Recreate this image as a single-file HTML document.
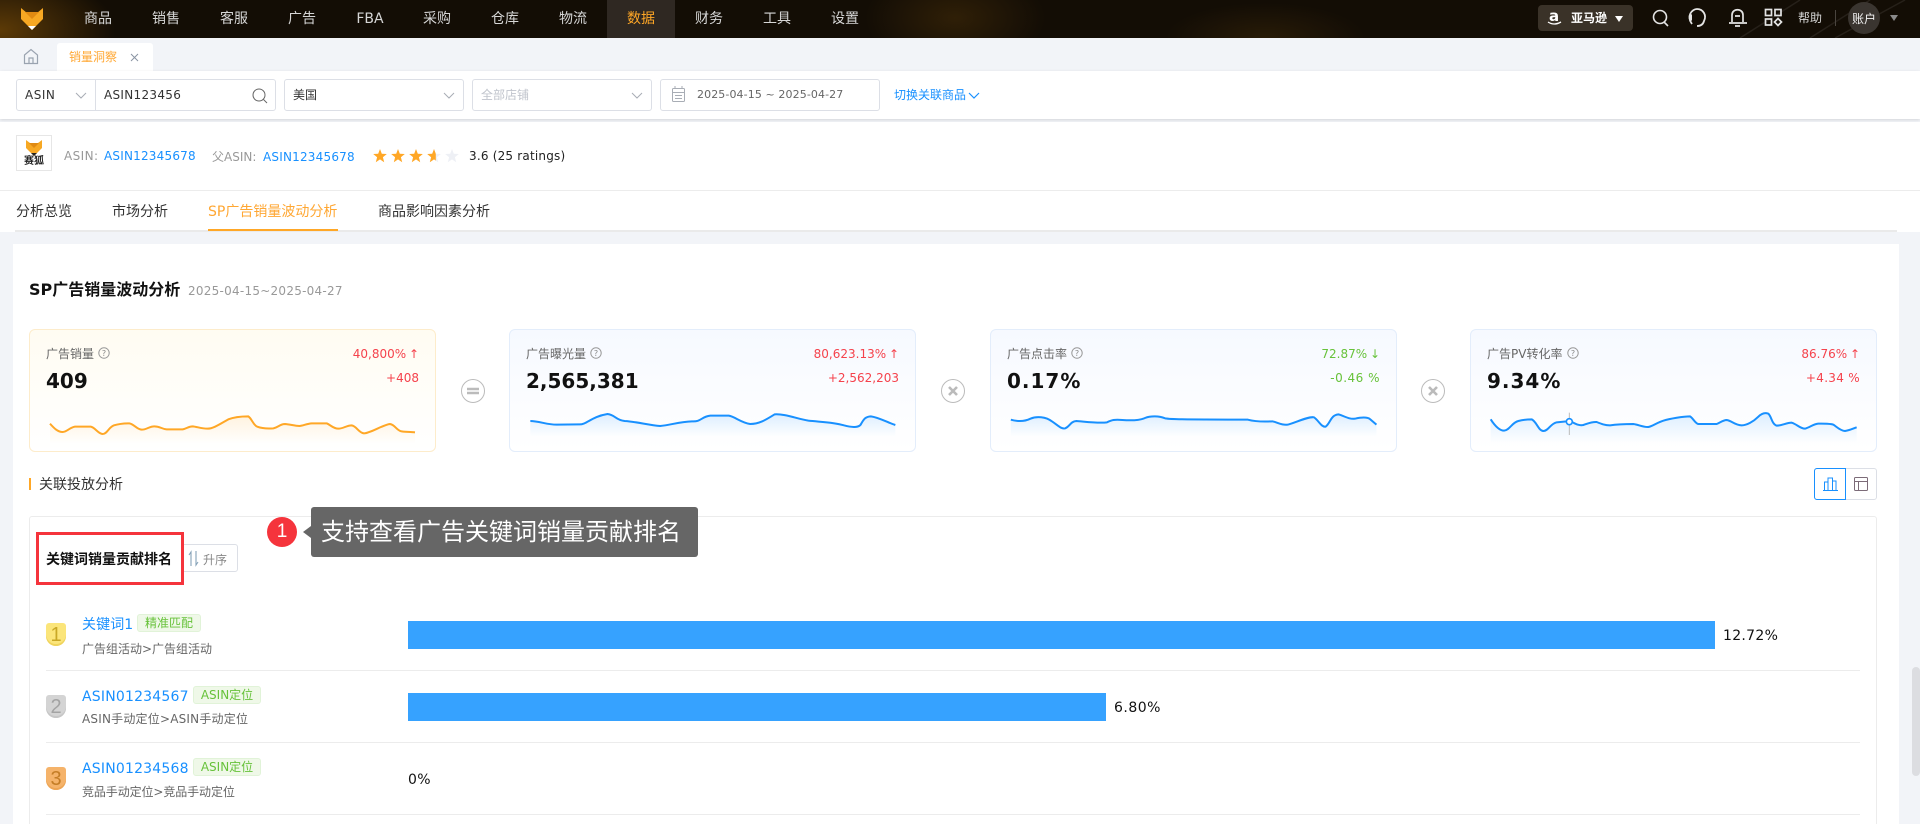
<!DOCTYPE html>
<html lang="zh">
<head>
<meta charset="utf-8">
<title>SP广告销量波动分析</title>
<style>
*{box-sizing:border-box;margin:0;padding:0}
html,body{width:1920px;height:824px;overflow:hidden;background:#f2f4f8}
body{position:relative;font-family:"DejaVu Sans","Noto Sans CJK SC",sans-serif;font-size:12px;color:#333}
.a{position:absolute}
.t{position:absolute;white-space:nowrap;line-height:20px}
.l{letter-spacing:.2px}
.nav{color:#d6d6d6;font-size:14px;top:9px;width:68px;text-align:center}
.box{position:absolute;top:79px;height:32px;background:#fff;border:1px solid #dcdfe6;border-radius:3px}
.blue{color:#1890ff}
.card{position:absolute;top:329px;width:407px;height:123px;border-radius:6px;border:1px solid #e3edfb;background:linear-gradient(#f6f9ff,#fff)}
.card.y{border-color:#fdeccb;background:linear-gradient(#fffcf2,#fff)}
.lab{color:#666;top:14px;left:16px}
.pct{top:14px;right:16px;font-size:12px;word-spacing:-1px}
.dlt{top:38px;right:16px;font-size:12px}
.val{top:39px;left:16px;font-size:20px;font-weight:bold;color:#111;line-height:24px}
.red{color:#f5424c}.grn{color:#67c23a}
.op{position:absolute;top:379px;width:24px;height:24px;border-radius:50%;border:1px solid #bbb;background:#fff}
.tag{position:absolute;height:18px;line-height:16px;background:#eff8e8;border:1px solid #e1f3d8;border-radius:3px;color:#67c23a;text-align:center;font-size:12px}
.sep{position:absolute;left:46px;width:1814px;height:1px;background:#ececec}
.name{font-size:14px;color:#1890ff;left:82px}
.sub{color:#666;left:82px}
.bar{position:absolute;left:408px;height:28px;background:#36a2ff}
.num{font-size:14px;color:#111;letter-spacing:.3px}
.m{position:absolute;left:46px;width:20px;height:23px;border-radius:3px 3px 10px 10px;text-align:center;font-family:"Liberation Sans",sans-serif;font-size:20px;line-height:24px}
</style>
</head>
<body>
<!-- top bar -->
<div class="a" style="left:0;top:0;width:1920px;height:38px;background:radial-gradient(ellipse 115px 60px at 0 30px,#5c3a06 0,rgba(90,58,6,0) 100%),radial-gradient(ellipse 90px 50px at 955px 18px,#2f1f07 0,rgba(60,39,8,0) 100%),radial-gradient(ellipse 100px 35px at 1265px 38px,#281b07 0,rgba(44,29,7,0) 100%),#130d05"></div>
<svg class="a" style="left:0;top:0" width="1920" height="38">
<polygon points="21,8 27,13 37,13 43,8 43,19 32,30 21,19" fill="#f7a823"/>
<polygon points="25,12 39,12 32,19" fill="#e08a12"/>
<polygon points="28,26 36,26 32,30" fill="#fff"/>
<path d="M1740 38 L1800 0M1810 38 L1870 0M1835 38 L1905 0" stroke="#262019" stroke-width="1.5" fill="none"/>
</svg>
<div class="a" style="left:607px;top:0;width:68px;height:38px;background:#2f2822"></div>
<div class="t nav" style="left:64px">商品</div>
<div class="t nav" style="left:132px">销售</div>
<div class="t nav" style="left:200px">客服</div>
<div class="t nav" style="left:268px">广告</div>
<div class="t nav" style="left:336px">FBA</div>
<div class="t nav" style="left:403px">采购</div>
<div class="t nav" style="left:471px">仓库</div>
<div class="t nav" style="left:539px">物流</div>
<div class="t nav" style="left:607px;color:#ffa726">数据</div>
<div class="t nav" style="left:675px">财务</div>
<div class="t nav" style="left:743px">工具</div>
<div class="t nav" style="left:811px">设置</div>

<div class="a" style="left:1538px;top:5px;width:95px;height:26px;background:#3a3228;border-radius:4px"></div>
<div class="t" style="left:1549px;top:6px;color:#fff;font-size:15px;font-weight:bold">a</div>
<svg class="a" style="left:1546px;top:21px" width="18" height="6"><path d="M2 1 Q8 5 15 1" stroke="#fff" stroke-width="1.3" fill="none"/></svg>
<div class="t" style="left:1571px;top:8px;color:#fff;font-weight:bold">亚马逊</div>
<svg class="a" style="left:0;top:0" width="1920" height="38">
<polygon points="1615,16 1623,16 1619,22" fill="#fff"/>
<circle cx="1660" cy="17" r="6.5" stroke="#e4e4e4" stroke-width="1.6" fill="none"/><path d="M1664 22 L1668 26" stroke="#e4e4e4" stroke-width="1.6"/>
<path d="M1692 24 C1686 16,1692 9,1697 9 C1703 9,1707 15,1704 21 C1703 25,1700 26,1697 26" stroke="#e4e4e4" stroke-width="1.8" fill="none"/><rect x="1689" y="14" width="3" height="7" rx="1.5" fill="#e4e4e4"/>
<path d="M1732 22 L1732 15 C1732 8,1743 8,1743 15 L1743 22 M1729 23 L1747 23 M1735 26 L1740 26 M1735 16 L1740 16" stroke="#e4e4e4" stroke-width="1.7" fill="none"/>
<rect x="1765.5" y="9.5" width="6" height="6" stroke="#e4e4e4" stroke-width="1.7" fill="none"/><rect x="1775" y="9.5" width="6" height="6" stroke="#e4e4e4" stroke-width="1.7" fill="none"/><rect x="1765.5" y="19" width="6" height="6" stroke="#e4e4e4" stroke-width="1.7" fill="none"/><polygon points="1778,18.5 1781.5,22 1778,25.5 1774.5,22" stroke="#e4e4e4" stroke-width="1.7" fill="none"/>
<rect x="1835" y="10" width="1" height="16" fill="#4a453f"/>
<circle cx="1864" cy="18" r="16" fill="#3a3530"/>
<polygon points="1890,15 1898,15 1894,21" fill="#8a8a8a"/>
</svg>
<div class="t" style="left:1798px;top:8px;color:#d6d6d6">帮助</div>
<div class="t" style="left:1852px;top:9px;color:#f2f2f2">账户</div>

<!-- tabs -->
<div class="a" style="left:57px;top:43px;width:96px;height:28px;background:#fff;border-radius:3px 3px 0 0"></div>
<svg class="a" style="left:23px;top:48px" width="16" height="17"><path d="M1.5 7 L8 1.5 L14.5 7 L14.5 15.5 L1.5 15.5 Z M6 15.5 L6 10 L10 10 L10 15.5" stroke="#9aa3b0" stroke-width="1.2" fill="none"/></svg>
<div class="t" style="left:69px;top:47px;color:#ffa733">销量洞察</div>
<svg class="a" style="left:130px;top:53px" width="9" height="9"><path d="M1 1 L8 8 M8 1 L1 8" stroke="#8a94a3" stroke-width="1"/></svg>

<!-- filter bar -->
<div class="a" style="left:0;top:71px;width:1920px;height:48px;background:#fff;box-shadow:0 1px 3px rgba(0,0,0,.13)"></div>
<div class="box" style="left:16px;width:260px"></div>
<div class="a" style="left:95px;top:79px;width:1px;height:32px;background:#dcdfe6"></div>
<div class="t" style="left:25px;top:85px;color:#333;letter-spacing:.5px">ASIN</div>
<div class="t" style="left:104px;top:85px;color:#333;letter-spacing:.3px">ASIN123456</div>
<div class="box" style="left:284px;width:180px"></div>
<div class="t" style="left:293px;top:85px">美国</div>
<div class="box" style="left:472px;width:180px"></div>
<div class="t" style="left:481px;top:85px;color:#c0c4cc">全部店铺</div>
<div class="box" style="left:660px;width:220px"></div>
<div class="t" style="left:697px;top:85px;color:#666;font-size:11px;letter-spacing:.1px">2025-04-15 ~ 2025-04-27</div>
<div class="t blue" style="left:894px;top:85px">切换关联商品</div>
<svg class="a" style="left:0;top:71px" width="1000" height="48">
<g fill="none" stroke="#a8adb5" stroke-width="1">
<path d="M76 22 L81 27 L86 22M444 22 L449 27 L454 22M632 22 L637 27 L642 22"/>
<circle cx="259" cy="24" r="6" stroke="#666"/><path d="M263.5 28.5 L267 32" stroke="#666"/>
<rect x="672.5" y="17.5" width="12" height="13" rx="1"/><path d="M672.5 21.5H684.5M675 24.5H682M675 27.5H682M675 15V18M682 15V18"/>
</g>
<path d="M969 22 L974 27 L979 22" fill="none" stroke="#1890ff" stroke-width="1.2"/>
</svg>

<!-- product -->
<div class="a" style="left:0;top:122px;width:1920px;height:110px;background:#fff"></div>
<div class="a" style="left:0;top:190px;width:1920px;height:1px;background:#ececec"></div>
<div class="a" style="left:16px;top:135px;width:36px;height:36px;background:#fff;border:1px solid #e6e6e6"></div>
<svg class="a" style="left:16px;top:135px" width="36" height="36">
<polygon points="10,5 14,8 22,8 26,5 26,13 18,21 10,13" fill="#f7a823"/><polygon points="13,8 23,8 18,13" fill="#e08a12"/><polygon points="15,18 21,18 18,21" fill="#222"/>
</svg>
<div class="t" style="left:24px;top:155px;font-size:10px;font-weight:bold;color:#222;line-height:14px">赛狐</div>
<div class="t l" style="left:64px;top:146px;color:#999;letter-spacing:.4px">ASIN:</div>
<div class="t blue l" style="left:104px;top:146px">ASIN12345678</div>
<div class="t" style="left:212px;top:147px;color:#999">父ASIN:</div>
<div class="t blue l" style="left:263px;top:147px">ASIN12345678</div>
<svg class="a" style="left:370px;top:146px" width="95" height="20">
<defs><path id="s" d="M7 2 L8.8 6.8 L13.8 7 L9.9 10.2 L11.2 15.2 L7 12.4 L2.8 15.2 L4.1 10.2 L.2 7 L5.2 6.8 Z"/></defs>
<use href="#s" x="3" y="1" fill="#ffa726"/><use href="#s" x="21" y="1" fill="#ffa726"/><use href="#s" x="39" y="1" fill="#ffa726"/><use href="#s" x="57" y="1" fill="#eef0f5"/><path transform="translate(57 1)" d="M7 2 L8.8 6.8 L13.8 7 L9.9 10.2 L11.2 15.2 L7 12.4 L2.8 15.2 L4.1 10.2 L.2 7 L5.2 6.8 Z" fill="#ffa726" clip-path="inset(0 5px 0 0)"/><use href="#s" x="75" y="1" fill="#eef0f5"/>
</svg>
<div class="t l" style="left:469px;top:146px;color:#222">3.6 (25 ratings)</div>
<div class="t" style="left:16px;top:202px;font-size:14px;color:#333">分析总览</div>
<div class="t" style="left:112px;top:202px;font-size:14px;color:#333">市场分析</div>
<div class="t" style="left:208px;top:202px;font-size:14px;color:#ffa733">SP广告销量波动分析</div>
<div class="t" style="left:378px;top:202px;font-size:14px;color:#333">商品影响因素分析</div>
<div class="a" style="left:15px;top:230px;width:1882px;height:2px;background:#eaeaea"></div>
<div class="a" style="left:208px;top:229px;width:130px;height:2px;background:#ffa726"></div>
<div class="a" style="left:1897px;top:232px;width:23px;height:592px;background:#f2f4f8"></div>
<div class="a" style="left:0;top:232px;width:1920px;height:12px;background:#f2f4f8"></div>

<!-- main -->
<div class="a" style="left:13px;top:244px;width:1886px;height:580px;background:#fff"></div>
<div class="a" style="left:1912px;top:667px;width:8px;height:109px;background:#dcdde1;border-radius:4px"></div>
<div class="t" style="left:29px;top:280px;font-size:16px;font-weight:bold;color:#111">SP广告销量波动分析</div>
<div class="t l" style="left:188px;top:281px;color:#999;letter-spacing:.25px">2025-04-15~2025-04-27</div>

<div class="card y" style="left:29px">
<div class="t lab">广告销量</div><div class="t pct red">40,800% ↑</div><div class="t dlt red">+408</div><div class="val t">409</div>
</div>
<div class="card" style="left:509px">
<div class="t lab">广告曝光量</div><div class="t pct red">80,623.13% ↑</div><div class="t dlt red">+2,562,203</div><div class="val t">2,565,381</div>
</div>
<div class="card" style="left:990px">
<div class="t lab">广告点击率</div><div class="t pct grn">72.87% ↓</div><div class="t dlt grn" style="letter-spacing:.5px">-0.46 %</div><div class="val t" style="letter-spacing:1px">0.17%</div>
</div>
<div class="card" style="left:1470px">
<div class="t lab">广告PV转化率</div><div class="t pct red">86.76% ↑</div><div class="t dlt red" style="letter-spacing:.3px">+4.34 %</div><div class="val t" style="letter-spacing:1px">9.34%</div>
</div>

<div class="op" style="left:461px"></div>
<div class="op" style="left:941px"></div>
<div class="op" style="left:1421px"></div>

<svg class="a" style="left:0;top:0" width="1920" height="824">
<defs>
<linearGradient id="gy" x1="0" y1="0" x2="0" y2="1"><stop offset="0" stop-color="#ffa726" stop-opacity=".13"/><stop offset="1" stop-color="#ffa726" stop-opacity="0"/></linearGradient>
<linearGradient id="gb" x1="0" y1="0" x2="0" y2="1"><stop offset="0" stop-color="#1890ff" stop-opacity=".14"/><stop offset="1" stop-color="#1890ff" stop-opacity="0"/></linearGradient>
</defs>
<!-- operators -->
<g stroke="#bbb" stroke-width="2.6" fill="none"><path d="M467 389H479M467 393H479"/><path d="M949 387L957 395M957 387L949 395"/><path d="M1429 387L1437 395M1437 387L1429 395"/></g>
<!-- help icons -->
<g fill="none" stroke="#999" stroke-width="1"><circle cx="104" cy="353" r="5.2"/><circle cx="596" cy="353" r="5.2"/><circle cx="1077" cy="353" r="5.2"/><circle cx="1573" cy="353" r="5.2"/></g>
<g font-size="8" fill="#888" text-anchor="middle" font-family="DejaVu Sans"><text x="104" y="356">?</text><text x="596" y="356">?</text><text x="1077" y="356">?</text><text x="1573" y="356">?</text></g>
<!-- spark 1 -->
<g transform="translate(20 320) scale(.33333)">
<path d="M90 311 C100 322,112 336,128 336 C140 336,150 322,165 320 L212 320 C225 322,235 342,248 342 C262 342,265 322,282 316 C295 312,315 310,328 310 C342 312,350 328,365 329 C380 329,388 319,403 319 C420 319,425 327,440 328 L488 328 C500 326,505 319,518 319 C530 320,545 326,562 326 C580 326,600 312,625 298 C640 292,665 289,685 289 C695 295,700 316,712 320 C725 325,745 326,760 325 C775 322,780 312,795 312 C810 313,825 318,838 318 C850 317,860 311,875 310 L920 310 C932 315,940 326,955 326 C970 326,980 316,995 316 C1010 318,1015 338,1032 340 C1050 340,1090 314,1110 312 C1125 314,1130 332,1145 334 C1160 336,1175 336,1185 337 L1185 370 L90 370 Z" fill="url(#gy)"/>
<path d="M90 311 C100 322,112 336,128 336 C140 336,150 322,165 320 L212 320 C225 322,235 342,248 342 C262 342,265 322,282 316 C295 312,315 310,328 310 C342 312,350 328,365 329 C380 329,388 319,403 319 C420 319,425 327,440 328 L488 328 C500 326,505 319,518 319 C530 320,545 326,562 326 C580 326,600 312,625 298 C640 292,665 289,685 289 C695 295,700 316,712 320 C725 325,745 326,760 325 C775 322,780 312,795 312 C810 313,825 318,838 318 C850 317,860 311,875 310 L920 310 C932 315,940 326,955 326 C970 326,980 316,995 316 C1010 318,1015 338,1032 340 C1050 340,1090 314,1110 312 C1125 314,1130 332,1145 334 C1160 336,1175 336,1185 337" fill="none" stroke="#ffa726" stroke-width="6"/>
</g>
<!-- spark 2 -->
<g transform="translate(0 240) scale(.6124 .33333)">
<path d="M866 543 C880 543,895 555,910 554 L945 553 C958 555,965 530,992 522 C1005 525,1005 540,1020 543 C1040 545,1060 556,1078 558 C1095 555,1110 545,1130 544 C1145 546,1145 530,1160 527 L1190 527 C1200 530,1210 548,1225 552 C1240 552,1250 540,1265 523 C1280 521,1300 535,1320 542 C1340 546,1360 546,1378 556 C1390 562,1400 564,1405 555 C1410 540,1412 530,1422 529 C1435 532,1450 548,1462 555 L1462 590 L866 590 Z" fill="url(#gb)"/>
<path d="M866 543 C880 543,895 555,910 554 L945 553 C958 555,965 530,992 522 C1005 525,1005 540,1020 543 C1040 545,1060 556,1078 558 C1095 555,1110 545,1130 544 C1145 546,1145 530,1160 527 L1190 527 C1200 530,1210 548,1225 552 C1240 552,1250 540,1265 523 C1280 521,1300 535,1320 542 C1340 546,1360 546,1378 556 C1390 562,1400 564,1405 555 C1410 540,1412 530,1422 529 C1435 532,1450 548,1462 555" fill="none" stroke="#1890ff" stroke-width="2" vector-effect="non-scaling-stroke"/>
</g>
<!-- spark 3 -->
<g transform="translate(960 240) scale(.6124 .33333)">
<path d="M83 539 C95 545,105 545,115 536 C125 528,140 530,150 544 C160 556,165 568,172 565 C180 558,180 545,190 543 C205 545,225 550,240 547 C248 540,252 538,265 540 C280 542,295 540,302 534 C312 527,325 528,335 535 C345 538,360 538,470 539 C480 544,490 546,510 544 C520 548,525 556,535 554 C545 550,570 528,578 532 C585 540,590 562,597 560 C605 550,605 525,618 523 C630 530,635 538,645 536 C655 532,665 530,670 538 L680 554 L680 590 L83 590 Z" fill="url(#gb)"/>
<path d="M83 539 C95 545,105 545,115 536 C125 528,140 530,150 544 C160 556,165 568,172 565 C180 558,180 545,190 543 C205 545,225 550,240 547 C248 540,252 538,265 540 C280 542,295 540,302 534 C312 527,325 528,335 535 C345 538,360 538,470 539 C480 544,490 546,510 544 C520 548,525 556,535 554 C545 550,570 528,578 532 C585 540,590 562,597 560 C605 550,605 525,618 523 C630 530,635 538,645 536 C655 532,665 530,670 538 L680 554" fill="none" stroke="#1890ff" stroke-width="2" vector-effect="non-scaling-stroke"/>
</g>
<!-- spark 4 -->
<g transform="translate(1460 320) scale(.33333)">
<path d="M92 298 C105 318,118 332,132 332 C150 330,155 308,175 303 C190 299,205 298,215 298 C230 305,235 332,250 333 C265 333,270 312,290 307 L330 303 C345 310,355 318,370 315 C385 310,395 305,410 306 C425 312,435 316,450 316 C470 313,490 312,520 312 C535 314,550 322,565 321 C580 318,590 308,610 302 C630 296,670 289,690 289 C700 295,705 310,715 312 L770 312 C780 308,790 300,800 300 C815 302,825 316,845 316 C860 316,880 305,895 290 C905 280,915 277,925 281 C935 290,935 312,950 317 C965 317,980 308,995 308 C1010 312,1020 326,1035 326 C1050 322,1060 312,1075 311 C1090 310,1115 312,1120 314 C1130 320,1140 332,1155 333 C1170 331,1180 325,1190 322 L1190 370 L92 370 Z" fill="url(#gb)"/>
<path d="M92 298 C105 318,118 332,132 332 C150 330,155 308,175 303 C190 299,205 298,215 298 C230 305,235 332,250 333 C265 333,270 312,290 307 L330 303 C345 310,355 318,370 315 C385 310,395 305,410 306 C425 312,435 316,450 316 C470 313,490 312,520 312 C535 314,550 322,565 321 C580 318,590 308,610 302 C630 296,670 289,690 289 C700 295,705 310,715 312 L770 312 C780 308,790 300,800 300 C815 302,825 316,845 316 C860 316,880 305,895 290 C905 280,915 277,925 281 C935 290,935 312,950 317 C965 317,980 308,995 308 C1010 312,1020 326,1035 326 C1050 322,1060 312,1075 311 C1090 310,1115 312,1120 314 C1130 320,1140 332,1155 333 C1170 331,1180 325,1190 322" fill="none" stroke="#1890ff" stroke-width="6"/>
<path d="M328 278V345" stroke="#bbb" stroke-width="3"/>
<circle cx="328" cy="305" r="9" fill="#fff" stroke="#1890ff" stroke-width="5"/>
</g>
</svg>

<!-- section head -->
<div class="a" style="left:29px;top:478px;width:2px;height:12px;background:#ffa726"></div>
<div class="t" style="left:39px;top:475px;font-size:14px;color:#333">关联投放分析</div>
<div class="a" style="left:1814px;top:468px;width:63px;height:32px;border:1px solid #dcdfe6;border-radius:3px"></div>
<div class="a" style="left:1814px;top:468px;width:32px;height:32px;border:1px solid #1890ff;border-radius:3px 0 0 3px"></div>
<svg class="a" style="left:1814px;top:468px" width="63" height="32">
<path d="M9 22.5 H24 M10.5 22 V14 H14 V22 M14 22 V10 H18.5 V22 M18.5 22 V13 H22 V22" stroke="#1890ff" stroke-width="1" fill="none"/>
<rect x="40.5" y="9.5" width="13" height="13" rx="1" stroke="#7c6b78" stroke-width="1" fill="none"/><path d="M40.5 13.5H53.5M44.5 13.5V22.5" stroke="#7c6b78" stroke-width="1"/>
</svg>

<!-- panel -->
<div class="a" style="left:29px;top:516px;width:1848px;height:320px;background:#fff;border:1px solid #ececec;border-radius:3px"></div>
<div class="a" style="left:183px;top:544px;width:55px;height:28px;border:1px solid #dcdfe6;border-radius:0 3px 3px 0"></div>
<div class="a" style="left:36px;top:532px;width:148px;height:53px;border:3px solid #f5343c;background:#fff"></div>
<div class="t" style="left:46px;top:550px;font-size:14px;font-weight:bold;color:#111">关键词销量贡献排名</div>
<svg class="a" style="left:188px;top:550px" width="12" height="18"><path d="M3 16 V2 L1 5 M8 1 V15 L10 12" stroke="#86a2b8" stroke-width="1.1" fill="none"/></svg>
<div class="t" style="left:203px;top:550px;color:#888">升序</div>

<div class="a" style="left:267px;top:517px;width:30px;height:30px;border-radius:50%;background:#f5343c;color:#fff;text-align:center;font-family:'Liberation Sans',sans-serif;font-size:19px;line-height:30px">1</div>
<div class="a" style="left:303px;top:526px;width:0;height:0;border-top:6px solid transparent;border-bottom:6px solid transparent;border-right:8px solid #666"></div>
<div class="a" style="left:311px;top:507px;width:387px;height:50px;background:#666;border-radius:3px"></div>
<div class="t" style="left:321px;top:517px;font-size:24px;line-height:30px;color:#fff">支持查看广告关键词销量贡献排名</div>

<!-- rows -->
<div class="m" style="top:623px;background:#fbe57a;color:#c9a826;box-shadow:inset 0 -2px 0 #efd35c">1</div>
<div class="t name" style="top:615px;letter-spacing:.1px">关键词1</div>
<div class="tag" style="left:137px;top:614px;width:64px">精准匹配</div>
<div class="t sub" style="top:639px">广告组活动&gt;广告组活动</div>
<div class="bar" style="top:621px;width:1307px"></div>
<div class="t num" style="left:1723px;top:626px">12.72%</div>
<div class="sep" style="top:670px"></div>

<div class="m" style="top:695px;background:#d4d4d4;color:#a3a3a3;box-shadow:inset 0 -2px 0 #c6c6c6">2</div>
<div class="t name l" style="top:687px">ASIN01234567</div>
<div class="tag" style="left:193px;top:686px;width:68px">ASIN定位</div>
<div class="t sub l" style="top:709px">ASIN手动定位&gt;ASIN手动定位</div>
<div class="bar" style="top:693px;width:698px"></div>
<div class="t num" style="left:1114px;top:698px;letter-spacing:.5px">6.80%</div>
<div class="sep" style="top:742px"></div>

<div class="m" style="top:767px;background:#f5b36a;color:#c47d26;box-shadow:inset 0 -2px 0 #eda555">3</div>
<div class="t name l" style="top:759px">ASIN01234568</div>
<div class="tag" style="left:193px;top:758px;width:68px">ASIN定位</div>
<div class="t sub" style="top:782px;letter-spacing:-.1px">竞品手动定位&gt;竞品手动定位</div>
<div class="t num" style="left:408px;top:770px">0%</div>
<div class="sep" style="top:814px"></div>
</body>
</html>
